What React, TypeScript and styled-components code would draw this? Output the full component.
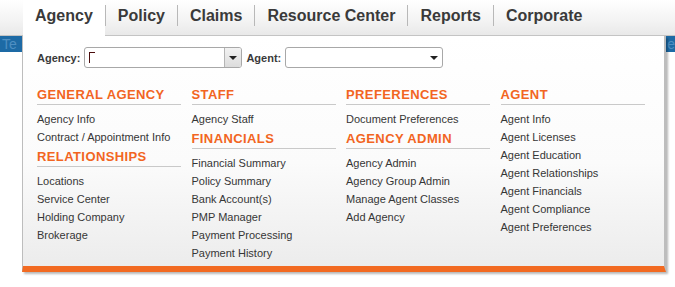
import React from 'react'
import styled, { createGlobalStyle } from 'styled-components'

const GlobalStyle = createGlobalStyle`
  html, body {
    margin: 0;
    padding: 0;
    background: #fff;
    font-family: 'Liberation Sans', Arial, sans-serif;
  }
`

const Page = styled.div`
  width: 675px;
  height: 287px;
  position: relative;
  overflow: hidden;
  background: #fff;
`

const NavBar = styled.div`
  height: 35px;
  display: flex;
  align-items: stretch;
  padding-left: 23px;
  background: linear-gradient(180deg, #ffffff 0%, #f3f3f3 60%, #e9e9e9 100%);
  border-bottom: 1px solid #c4c4c4;
`

const Tab = styled.div<{ $active?: boolean }>`
  display: flex;
  align-items: center;
  padding: 0 12px 4px 12px;
  font-size: 16px;
  font-weight: 700;
  color: #3a3a3a;
  background: ${p => (p.$active ? '#fff' : 'transparent')};
  margin-bottom: ${p => (p.$active ? '-1px' : '0')};
`

const Divider = styled.div`
  width: 1px;
  margin: 5px 0 9px;
  background: #b8b8b8;
`

const BehindBar = styled.div`
  height: 16px;
  background: #1d6aa5;
  color: #4f8fc2;
  font-size: 14px;
  line-height: 16px;
  padding-left: 2px;
  display: flex;
  justify-content: space-between;
`

const Menu = styled.div`
  position: absolute;
  left: 22px;
  top: 36px;
  width: 627px;
  padding: 11px 0 4px 14px;
  background: linear-gradient(180deg, #ffffff 0%, #fbfbfb 55%, #ececec 100%);
  border-left: 1px solid #bdbdbd;
  border-right: 2px solid #bdbdbd;
  border-bottom: 6px solid #f26a21;
  box-shadow: 2px 2px 2px rgba(0, 0, 0, 0.28);
`

const FormRow = styled.div`
  display: flex;
  align-items: center;
  gap: 4px;
  height: 21px;
`

const Label = styled.span`
  font-size: 11px;
  font-weight: 700;
  color: #3a3a3a;
`

const Select = styled.div`
  position: relative;
  box-sizing: border-box;
  width: 158px;
  height: 21px;
  border: 1px solid #a8a8a8;
  border-radius: 3px;
  background: #fff;
  display: flex;
  justify-content: flex-end;
  overflow: hidden;
`

const SelectButton = styled.div<{ $boxed?: boolean }>`
  width: 16px;
  display: flex;
  align-items: center;
  justify-content: center;
  background: ${p => (p.$boxed ? 'linear-gradient(180deg, #f2f2f2, #dcdcdc)' : 'transparent')};
  border-left: ${p => (p.$boxed ? '1px solid #b5b5b5' : 'none')};

  &::after {
    content: '';
    border-left: 4px solid transparent;
    border-right: 4px solid transparent;
    border-top: 4px solid #222;
  }
`

const Caret = styled.span`
  position: absolute;
  left: 4px;
  top: 4px;
  width: 5px;
  height: 10px;
  border-left: 1px solid #4a0c0c;
  border-top: 1px solid #4a0c0c;
`

const Columns = styled.div`
  display: grid;
  grid-template-columns: repeat(4, 144px);
  column-gap: 10.5px;
  margin-top: 18px;
`

const Column = styled.div`
  display: flex;
  flex-direction: column;
`

const Heading = styled.div<{ $first?: boolean }>`
  font-size: 13px;
  letter-spacing: 0.4px;
  font-weight: 700;
  line-height: 17px;
  color: #f26522;
  padding-bottom: 1px;
  border-bottom: 1px solid #c9c9c9;
  margin-top: ${p => (p.$first ? '0' : '2px')};
  margin-bottom: 5px;
`

const Link = styled.div`
  font-size: 11px;
  line-height: 18px;
  color: #363636;
  white-space: nowrap;
`

type Section = { title: string; links: string[] }

const columns: Section[][] = [
  [
    { title: 'GENERAL AGENCY', links: ['Agency Info', 'Contract / Appointment Info'] },
    { title: 'RELATIONSHIPS', links: ['Locations', 'Service Center', 'Holding Company', 'Brokerage'] },
  ],
  [
    { title: 'STAFF', links: ['Agency Staff'] },
    {
      title: 'FINANCIALS',
      links: [
        'Financial Summary',
        'Policy Summary',
        'Bank Account(s)',
        'PMP Manager',
        'Payment Processing',
        'Payment History',
      ],
    },
  ],
  [
    { title: 'PREFERENCES', links: ['Document Preferences'] },
    {
      title: 'AGENCY ADMIN',
      links: ['Agency Admin', 'Agency Group Admin', 'Manage Agent Classes', 'Add Agency'],
    },
  ],
  [
    {
      title: 'AGENT',
      links: [
        'Agent Info',
        'Agent Licenses',
        'Agent Education',
        'Agent Relationships',
        'Agent Financials',
        'Agent Compliance',
        'Agent Preferences',
      ],
    },
  ],
]

const tabs = ['Agency', 'Policy', 'Claims', 'Resource Center', 'Reports', 'Corporate']

export default function App() {
  return (
    <Page>
      <GlobalStyle />
      <NavBar>
        {tabs.map((t, i) => (
          <React.Fragment key={t}>
            {i > 0 && <Divider />}
            <Tab $active={i === 0}>{t}</Tab>
          </React.Fragment>
        ))}
      </NavBar>
      <BehindBar>
        <span>Te</span>
        <span>e</span>
      </BehindBar>

      <Menu>
        <FormRow>
          <Label>Agency:</Label>
          <Select>
            <Caret />
            <SelectButton $boxed />
          </Select>
          <Label>Agent:</Label>
          <Select>
            <SelectButton />
          </Select>
        </FormRow>

        <Columns>
          {columns.map((col, ci) => (
            <Column key={ci}>
              {col.map((s, si) => (
                <React.Fragment key={s.title}>
                  <Heading $first={si === 0}>{s.title}</Heading>
                  {s.links.map(l => (
                    <Link key={l}>{l}</Link>
                  ))}
                </React.Fragment>
              ))}
            </Column>
          ))}
        </Columns>
      </Menu>
    </Page>
  )
}
